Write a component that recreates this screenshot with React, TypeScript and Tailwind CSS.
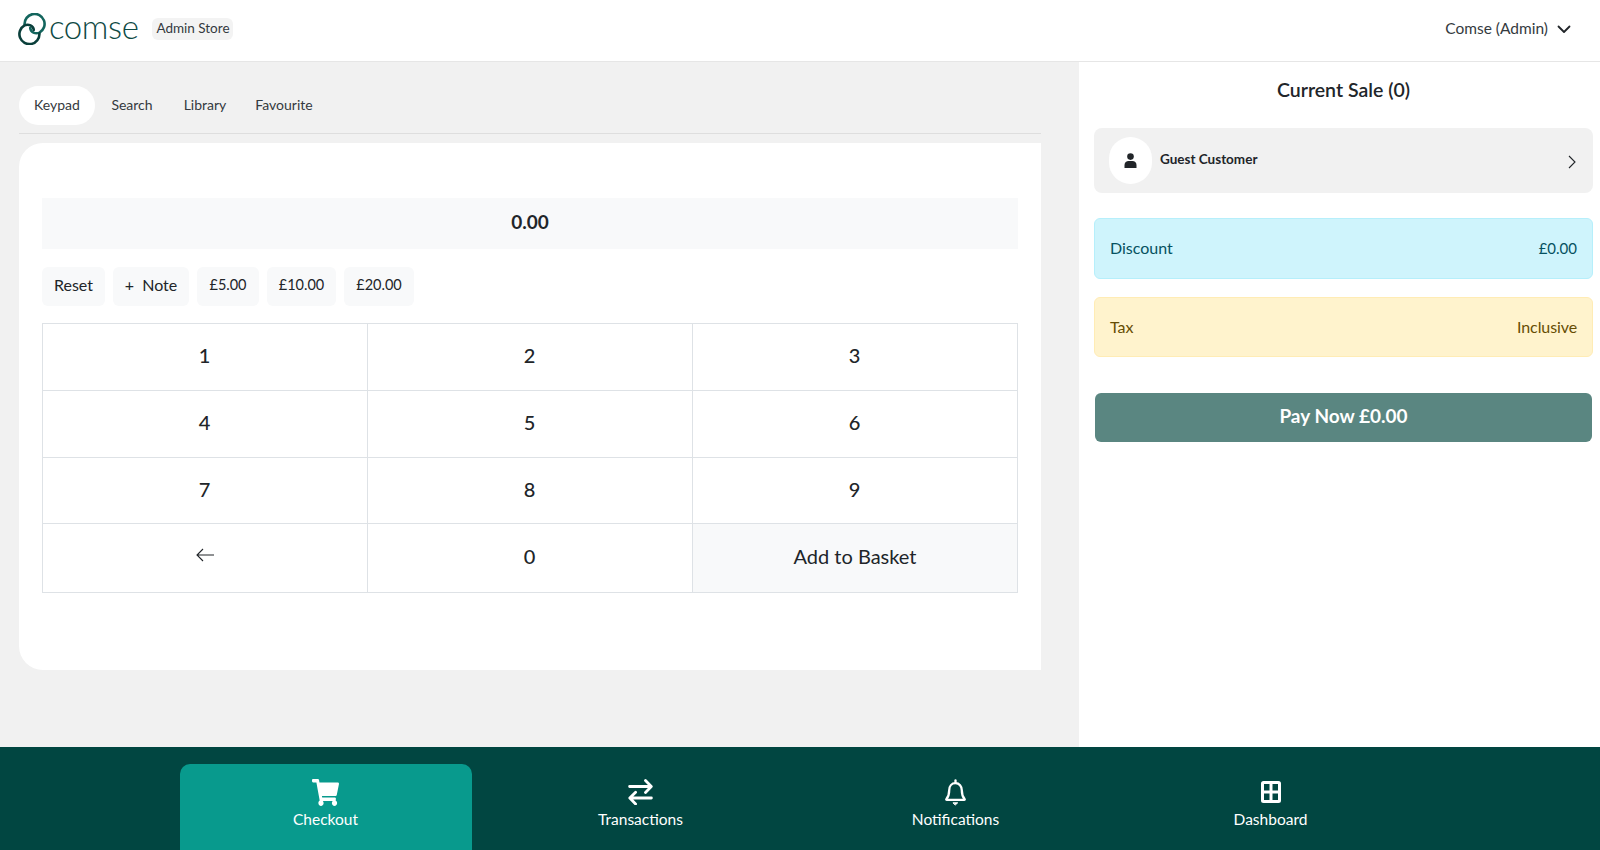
import React from "react";
import { FaShoppingCart } from "react-icons/fa";

function Logo() {
  return (
    <div className="flex items-center">
      <svg width="28" height="32" viewBox="0 0 28 32" fill="none" strokeWidth="2.6" strokeLinecap="round">
        <path d="M6.6 11.5 A 10 10 0 1 1 21.5 19.6 C 17.5 21.4 12.6 19.4 12.2 15" stroke="#13655d" />
        <path d="M21.4 20.6 A 10 10 0 1 1 6.5 12.4 C 10.5 10.6 15.4 12.6 15.8 17" stroke="#0a3f3b" />
      </svg>
      <span className="ml-[3px] text-[33px] leading-none font-light text-[#0f4a45] tracking-[-0.4px] -mt-[5px]">comse</span>
    </div>
  );
}

function Swap() {
  return (
    <svg width="25" height="26" viewBox="0 0 25 26" fill="none" stroke="#fff" strokeWidth="2.8" strokeLinecap="round" strokeLinejoin="round">
      <path d="M1.6 7.5h21.5M17.5 1.6l5.8 5.9-5.8 5.9" />
      <path d="M23.4 19H2M7.6 13.2L1.8 19l5.8 5.9" />
    </svg>
  );
}

function Bell() {
  return (
    <svg width="21" height="27" viewBox="0 0 21 27" fill="none" stroke="#fff" strokeWidth="2.3" strokeLinejoin="round" strokeLinecap="round">
      <path d="M10.5 4.2c-3.8 0-6.3 2.9-6.3 7 0 5-1.1 6.9-2.8 8.9-.3.4 0 .8.4.8h17.4c.4 0 .7-.4.4-.8-1.7-2-2.8-3.9-2.8-8.9 0-4.1-2.5-7-6.3-7z" />
      <path d="M10.5 1.5v2" />
      <path d="M8.3 23.8h4.4L10.5 25.8z" fill="#fff" strokeWidth="1" />
    </svg>
  );
}

function Grid4() {
  return (
    <svg width="20" height="22" viewBox="0 0 20 22" fill="#fff">
      <path fillRule="evenodd" d="M2.5 0h15A2.5 2.5 0 0 1 20 2.5v17a2.5 2.5 0 0 1-2.5 2.5h-15A2.5 2.5 0 0 1 0 19.5v-17A2.5 2.5 0 0 1 2.5 0zM3 3v6.5h5.5V3zm8.500 0v6.5H17V3zM3 12.500V19h5.500v-6.500zm8.500 0V19H17v-6.500z" />
    </svg>
  );
}

function NavItem({ label, active, children }: { label: string; active?: boolean; children: React.ReactNode }) {
  return (
    <div className={"w-[292px] pt-[14px] rounded-t-[10px] flex flex-col items-center text-white " + (active ? "bg-[#089a8d]" : "")}>
      <div className="h-[28px] flex items-center justify-center">{children}</div>
      <div className="text-[15.5px] leading-[22px] mt-[2px]">{label}</div>
    </div>
  );
}

function QuickBtn({ children, w, money }: { children: React.ReactNode; w: string; money?: boolean }) {
  return <div className={"h-[39px] pb-[3px] rounded-[6px] bg-[#f8f9fa] flex items-center justify-center text-[#212529] " + (money ? "text-[14.5px] " : "text-[16px] ") + w}>{children}</div>;
}

function Key({ children, last, bottom, wide }: { children: React.ReactNode; last?: boolean; bottom?: boolean; wide?: boolean }) {
  return (
    <div className={"flex items-center justify-center text-[20px] pb-[4px] border-[#dee2e6] text-[#212529] " + (last ? "" : "border-r ") + (bottom ? "" : "border-b ") + (wide ? "bg-[#f8f9fa] font-normal" : "font-medium pr-[1px]")}>
      {children}
    </div>
  );
}

export default function App() {
  return (
    <div className="w-[1600px] h-[850px] flex flex-col overflow-hidden bg-white text-[#212529] font-['Lato',sans-serif]">
      <header className="h-[62px] shrink-0 flex items-center justify-between border-b border-[#e6e6e6] pl-[18px] pr-[29px] pb-[3px]">
        <div className="flex items-center">
          <Logo />
          <span className="ml-[14px] h-[22px] w-[81px] pb-[1px] rounded-[6px] bg-[#f3f3f3] flex items-center justify-center text-[13.5px] text-[#343a40]">Admin Store</span>
        </div>
        <div className="flex items-center gap-[9px] text-[15.5px] text-[#343a40]">
          <span className="pb-[1px]">Comse (Admin)</span>
          <svg width="14" height="9" viewBox="0 0 14 9" fill="none" stroke="#212529" strokeWidth="1.8" strokeLinecap="round" strokeLinejoin="round"><path d="M1.5 1.5L7 7l5.5-5.5" /></svg>
        </div>
      </header>

      <div className="h-[685px] shrink-0 flex">
        <main className="w-[1079px] shrink-0 bg-[#f1f1f1] pl-[19px] pr-[38px] pt-[24px]">
          <div className="h-[48px] flex items-start border-b border-[#dedede] text-[14px] text-[#343a40]">
            <div className="h-[39px] w-[76px] pb-[2px] rounded-full bg-white flex items-center justify-center">Keypad</div>
            <div className="h-[39px] w-[74px] pb-[2px] flex items-center justify-center">Search</div>
            <div className="h-[39px] w-[72px] pb-[2px] flex items-center justify-center">Library</div>
            <div className="h-[39px] w-[86px] pb-[2px] flex items-center justify-center">Favourite</div>
          </div>
          <section className="mt-[9px] h-[527px] bg-white rounded-l-[24px] px-[23px] pt-[55px]">
            <div className="h-[51px] pb-[2px] bg-[#f8f9fa] flex items-center justify-center text-[19px] font-bold text-[#212529]">0.00</div>
            <div className="mt-[18px] flex gap-[8px]">
              <QuickBtn w="w-[63px]">Reset</QuickBtn>
              <QuickBtn w="w-[76px]">+&nbsp;&nbsp;Note</QuickBtn>
              <QuickBtn w="w-[62px]" money>£5.00</QuickBtn>
              <QuickBtn w="w-[69px]" money>£10.00</QuickBtn>
              <QuickBtn w="w-[70px]" money>£20.00</QuickBtn>
            </div>
            <div className="mt-[17px] h-[270px] border border-[#dee2e6] grid grid-cols-[325px_325px_1fr] grid-rows-[67px_67px_66px_1fr]">
              <Key>1</Key><Key>2</Key><Key last>3</Key>
              <Key>4</Key><Key>5</Key><Key last>6</Key>
              <Key>7</Key><Key>8</Key><Key last>9</Key>
              <Key bottom>
                <svg className="mb-[2px]" width="18" height="14" viewBox="0 0 18 14" fill="none" stroke="#212529" strokeWidth="1.1"><path d="M1 7h17M7 1L1 7l6 6" /></svg>
              </Key>
              <Key bottom>0</Key>
              <Key bottom last wide>Add to Basket</Key>
            </div>
          </section>
        </main>
        <aside className="flex-1 pl-[15px] pr-[7px]">
          <h2 className="mt-[14px] h-[28px] text-center text-[19.5px] leading-[28px] font-semibold text-[#212529]">Current Sale (0)</h2>
          <div className="mt-[24px] h-[65px] rounded-[8px] bg-[#f1f1f1] flex items-center pl-[15px] pr-[16px]">
            <div className="w-[43px] h-[47px] rounded-full bg-white flex items-center justify-center">
              <svg width="13" height="15" viewBox="0 0 13 15" fill="#212529"><circle cx="6.500" cy="3.600" r="3.300" /><path d="M0.5 15v-3c0-2.400 2-4 4-4h4c2 0 4 1.600 4 4v3z" /></svg>
            </div>
            <span className="ml-[8px] text-[13.5px] font-bold text-[#212529] -mt-[2px]">Guest Customer</span>
            <svg className="ml-auto mt-[3px] mr-[1px]" width="8" height="14" viewBox="0 0 8 14" fill="none" stroke="#212529" strokeWidth="1.1"><path d="M1 1l6 6-6 6" /></svg>
          </div>
          <div className="mt-[25px] h-[61px] pb-[1px] rounded-[6px] bg-[#cff4fc] border border-[#b6effb] text-[#055160] flex items-center justify-between px-[15px] text-[16px]">
            <span>Discount</span><span className="text-[15px]">£0.00</span>
          </div>
          <div className="mt-[18px] h-[60px] rounded-[6px] bg-[#fff3cd] border border-[#ffecb5] text-[#664d03] flex items-center justify-between px-[15px] text-[16px]">
            <span>Tax</span><span className="tracking-[-0.1px]">Inclusive</span>
          </div>
          <div className="mt-[36px] mx-[1px] h-[49px] pb-[3px] rounded-[6px] bg-[#5a8681] text-white flex items-center justify-center text-[19px] font-bold">Pay Now £0.00</div>
        </aside>
      </div>

      <nav className="flex-1 bg-[#014641] flex justify-center items-end pr-[4px]">
        <div className="flex h-[86px] gap-[23px]">
          <NavItem label="Checkout" active><FaShoppingCart size={27} className="text-white" preserveAspectRatio="none" /></NavItem>
          <NavItem label="Transactions"><Swap /></NavItem>
          <NavItem label="Notifications"><Bell /></NavItem>
          <NavItem label="Dashboard"><Grid4 /></NavItem>
        </div>
      </nav>
    </div>
  );
}
